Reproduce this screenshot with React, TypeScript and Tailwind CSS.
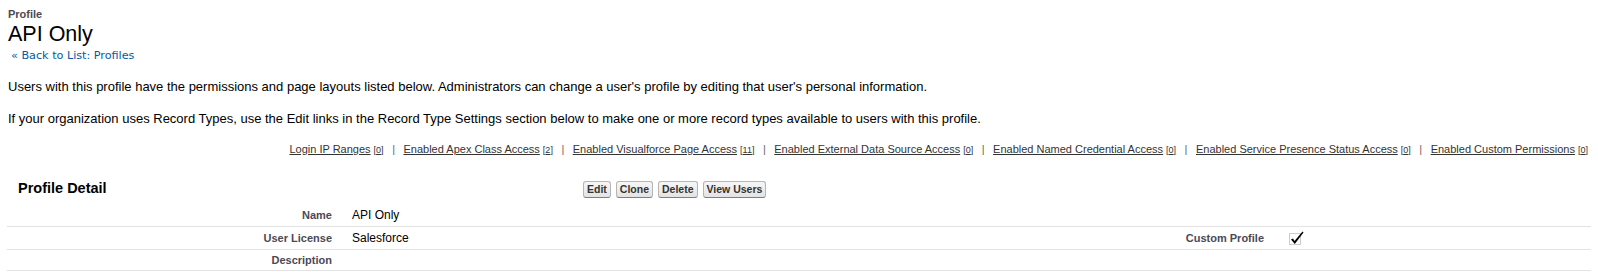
import React from 'react';

const relatedLinks = [
  { label: 'Login IP Ranges', count: 0 },
  { label: 'Enabled Apex Class Access', count: 2 },
  { label: 'Enabled Visualforce Page Access', count: 11 },
  { label: 'Enabled External Data Source Access', count: 0 },
  { label: 'Enabled Named Credential Access', count: 0 },
  { label: 'Enabled Service Presence Status Access', count: 0 },
  { label: 'Enabled Custom Permissions', count: 0 },
];

const CheckedBox: React.FC = () => (
  <svg width="16" height="16" viewBox="0 0 16 16" className="block">
    <rect x="0.5" y="3.5" width="11" height="11" fill="none" stroke="#9a9a9a" strokeWidth="1" strokeDasharray="1 1" />
    <path d="M2 9.5 L4 8.5 L5.5 11 L13.5 1.5 L14.5 2.5 L5.8 14 Z" fill="#000" />
  </svg>
);

const Button: React.FC<{ children: React.ReactNode }> = ({ children }) => (
  <button className="h-[17px] px-[3px] rounded-[3px] border border-[#b5b5b5] border-b-[#7f7f7f] bg-gradient-to-b from-[#f7f7f7] to-[#e3e3e3] text-[10.5px] leading-[14px] font-bold text-[#333]">
    {children}
  </button>
);

const labelCls = 'text-right pr-[10px] text-[11px] font-bold text-[#4a4a56]';

const App: React.FC = () => {
  return (
    <div className="w-[1598px] h-[272px] overflow-hidden bg-white text-black font-['Liberation_Sans',Arial,sans-serif]">
      <div className="pt-[8px] pl-[8px]">
        <div className="text-[11px] leading-[13px] font-bold text-[#4a4a56]">Profile</div>
        <h1 className="mt-[1px] text-[21.5px] leading-[24px] font-normal">API Only</h1>
        <div className="mt-[3px] pl-[3px] text-[11.2px] leading-[14px] font-['DejaVu_Sans',Verdana,sans-serif]">
          <span className="text-[#015ba7]">«</span>{' '}
          <a className="text-[#015ba7]">Back to List: Profiles</a>
        </div>
      </div>

      <p className="mt-[16px] pl-[8px] text-[13px] leading-[16px]">
        Users with this profile have the permissions and page layouts listed below. Administrators can change a user's profile by editing that user's personal information.
      </p>
      <p className="mt-[16px] pl-[8px] text-[13px] leading-[16px]">
        If your organization uses Record Types, use the Edit links in the Record Type Settings section below to make one or more record types available to users with this profile.
      </p>

      <div className="mt-[15px] pr-[10px] flex justify-end items-baseline text-[11px] leading-[14px] text-[#333]">
        {relatedLinks.map((l, i) => (
          <React.Fragment key={l.label}>
            {i > 0 && <span className="mx-[8.5px] text-[#666]">|</span>}
            <a className="underline">{l.label}</a>
            <span className="ml-[3px] text-[9px] underline">[{l.count}]</span>
          </React.Fragment>
        ))}
      </div>

      <div className="mt-[17px] flex items-center h-[30px]">
        <h2 className="w-[583px] pl-[18px] text-[14.5px] font-bold">Profile Detail</h2>
        <div className="flex gap-[5px]">
          <Button>Edit</Button>
          <Button>Clone</Button>
          <Button>Delete</Button>
          <Button>View Users</Button>
        </div>
      </div>

      <div className="mx-[7px]">
        <div className="flex h-[23px] items-center border-b border-[#e3e3e3]">
          <div className={`w-[335px] ${labelCls}`}>Name</div>
          <div className="w-[470px] pl-[10px] text-[12px]">API Only</div>
          <div className={`w-[462px] ${labelCls}`}></div>
          <div className="flex-1 pl-[15px] text-[12px]"></div>
        </div>
        <div className="flex h-[23px] items-center border-b border-[#e3e3e3]">
          <div className={`w-[335px] ${labelCls}`}>User License</div>
          <div className="w-[470px] pl-[10px] text-[12px]">Salesforce</div>
          <div className={`w-[462px] ${labelCls}`}>Custom Profile</div>
          <div className="flex-1 pl-[15px] text-[12px]">
            <CheckedBox />
          </div>
        </div>
        <div className="flex h-[21px] items-center border-b border-[#e3e3e3]">
          <div className={`w-[335px] ${labelCls}`}>Description</div>
          <div className="w-[470px] pl-[10px] text-[12px]"></div>
          <div className="w-[462px]"></div>
          <div className="flex-1"></div>
        </div>
      </div>
    </div>
  );
};

export default App;
